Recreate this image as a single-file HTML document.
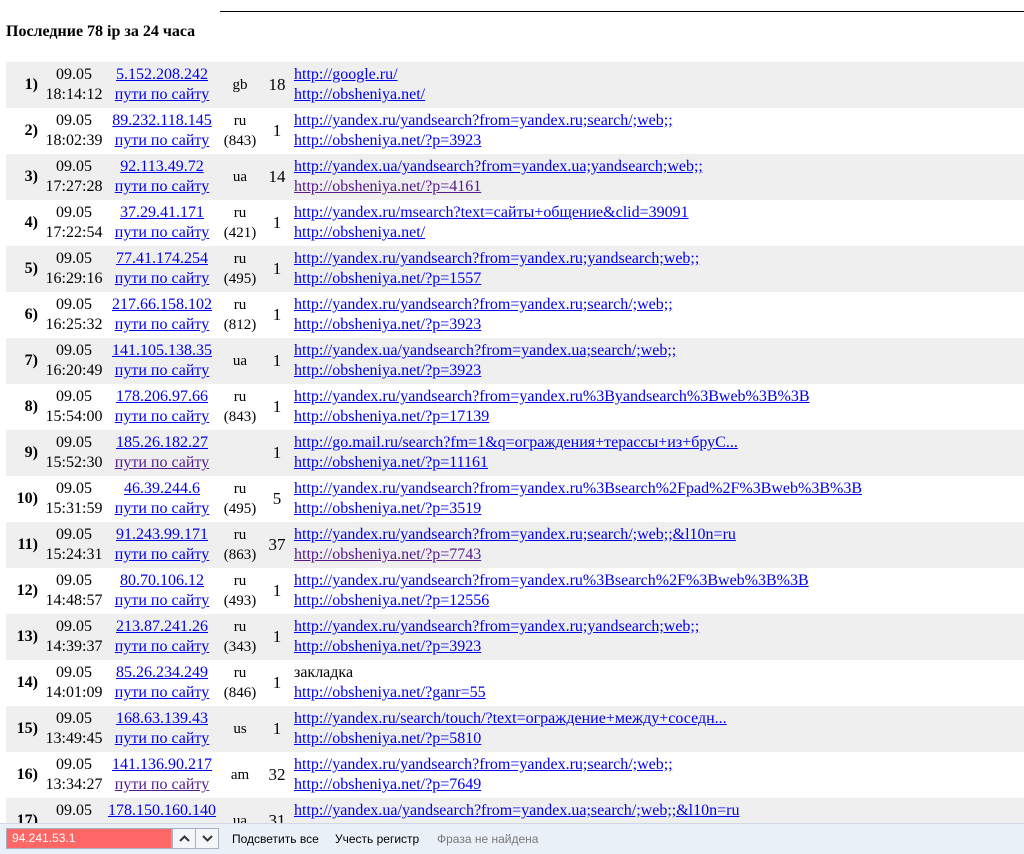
<!DOCTYPE html>
<html><head><meta charset="utf-8"><style>
body{margin:0;background:#fff;font-family:"Liberation Serif",serif;font-size:16px;color:#000;width:1024px;height:853px;overflow:hidden;position:relative}
.hr{position:absolute;left:220px;top:11px;width:804px;height:1px;background:#000}
h1{position:absolute;left:6px;top:23px;margin:0;font-size:16px;font-weight:bold}
table{position:absolute;left:6px;top:62px;width:1018px;border-collapse:collapse;table-layout:fixed}
td{height:46px;padding:0;line-height:20px;vertical-align:middle;white-space:nowrap;overflow:visible}
tr:nth-child(odd) td{background:#efefef}
.n{text-align:right;font-weight:bold;padding-right:2px}
.d{text-align:center}
.i{text-align:center}
.c{text-align:center;font-size:15px}
.k{text-align:center;font-size:17px}
.u{padding-left:4px}
a{color:#0000ee;text-decoration:underline}
a.v{color:#551a8b}
.bar{position:absolute;left:0;top:823px;width:1024px;height:30px;background:#eaf0f7;border-top:1px solid #cfd8e3;font-family:"Liberation Sans",sans-serif;font-size:12px}
.inp{position:absolute;left:6px;top:4px;width:166px;height:21px;background:#ff6666;border:1px solid #a6b2c2;box-sizing:border-box;color:#fff;line-height:19px;padding-left:5px}
.btn{position:absolute;top:4px;width:24px;height:21px;border:1px solid #a6b2c2;box-sizing:border-box;background:#f4f6f9}
.btn svg{position:absolute;left:6px;top:5px}
.t{position:absolute;top:8px;color:#000}
</style></head><body>
<div class="hr"></div>
<h1>Последние 78 ip за 24 часа</h1>
<table>
<colgroup><col style="width:34px"><col style="width:68px"><col style="width:108px"><col style="width:48px"><col style="width:26px"><col></colgroup>
<tr><td class="n">1)</td><td class="d">09.05<br>18:14:12</td><td class="i"><a>5.152.208.242</a><br><a>пути по сайту</a></td><td class="c">gb</td><td class="k">18</td><td class="u"><a>http://google.ru/</a><br><a>http://obsheniya.net/</a></td></tr>
<tr><td class="n">2)</td><td class="d">09.05<br>18:02:39</td><td class="i"><a>89.232.118.145</a><br><a>пути по сайту</a></td><td class="c">ru<br>(843)</td><td class="k">1</td><td class="u"><a>http://yandex.ru/yandsearch?from=yandex.ru;search/;web;;</a><br><a>http://obsheniya.net/?p=3923</a></td></tr>
<tr><td class="n">3)</td><td class="d">09.05<br>17:27:28</td><td class="i"><a>92.113.49.72</a><br><a>пути по сайту</a></td><td class="c">ua</td><td class="k">14</td><td class="u"><a>http://yandex.ua/yandsearch?from=yandex.ua;yandsearch;web;;</a><br><a class="v">http://obsheniya.net/?p=4161</a></td></tr>
<tr><td class="n">4)</td><td class="d">09.05<br>17:22:54</td><td class="i"><a>37.29.41.171</a><br><a>пути по сайту</a></td><td class="c">ru<br>(421)</td><td class="k">1</td><td class="u"><a>http://yandex.ru/msearch?text=сайты+общение&amp;clid=39091</a><br><a>http://obsheniya.net/</a></td></tr>
<tr><td class="n">5)</td><td class="d">09.05<br>16:29:16</td><td class="i"><a>77.41.174.254</a><br><a>пути по сайту</a></td><td class="c">ru<br>(495)</td><td class="k">1</td><td class="u"><a>http://yandex.ru/yandsearch?from=yandex.ru;yandsearch;web;;</a><br><a>http://obsheniya.net/?p=1557</a></td></tr>
<tr><td class="n">6)</td><td class="d">09.05<br>16:25:32</td><td class="i"><a>217.66.158.102</a><br><a>пути по сайту</a></td><td class="c">ru<br>(812)</td><td class="k">1</td><td class="u"><a>http://yandex.ru/yandsearch?from=yandex.ru;search/;web;;</a><br><a>http://obsheniya.net/?p=3923</a></td></tr>
<tr><td class="n">7)</td><td class="d">09.05<br>16:20:49</td><td class="i"><a>141.105.138.35</a><br><a>пути по сайту</a></td><td class="c">ua</td><td class="k">1</td><td class="u"><a>http://yandex.ua/yandsearch?from=yandex.ua;search/;web;;</a><br><a>http://obsheniya.net/?p=3923</a></td></tr>
<tr><td class="n">8)</td><td class="d">09.05<br>15:54:00</td><td class="i"><a>178.206.97.66</a><br><a>пути по сайту</a></td><td class="c">ru<br>(843)</td><td class="k">1</td><td class="u"><a>http://yandex.ru/yandsearch?from=yandex.ru%3Byandsearch%3Bweb%3B%3B</a><br><a>http://obsheniya.net/?p=17139</a></td></tr>
<tr><td class="n">9)</td><td class="d">09.05<br>15:52:30</td><td class="i"><a>185.26.182.27</a><br><a class="v">пути по сайту</a></td><td class="c"></td><td class="k">1</td><td class="u"><a>http://go.mail.ru/search?fm=1&amp;q=ограждения+терассы+из+бруС...</a><br><a>http://obsheniya.net/?p=11161</a></td></tr>
<tr><td class="n">10)</td><td class="d">09.05<br>15:31:59</td><td class="i"><a>46.39.244.6</a><br><a>пути по сайту</a></td><td class="c">ru<br>(495)</td><td class="k">5</td><td class="u"><a>http://yandex.ru/yandsearch?from=yandex.ru%3Bsearch%2Fpad%2F%3Bweb%3B%3B</a><br><a>http://obsheniya.net/?p=3519</a></td></tr>
<tr><td class="n">11)</td><td class="d">09.05<br>15:24:31</td><td class="i"><a>91.243.99.171</a><br><a>пути по сайту</a></td><td class="c">ru<br>(863)</td><td class="k">37</td><td class="u"><a>http://yandex.ru/yandsearch?from=yandex.ru;search/;web;;&amp;l10n=ru</a><br><a class="v">http://obsheniya.net/?p=7743</a></td></tr>
<tr><td class="n">12)</td><td class="d">09.05<br>14:48:57</td><td class="i"><a>80.70.106.12</a><br><a>пути по сайту</a></td><td class="c">ru<br>(493)</td><td class="k">1</td><td class="u"><a>http://yandex.ru/yandsearch?from=yandex.ru%3Bsearch%2F%3Bweb%3B%3B</a><br><a>http://obsheniya.net/?p=12556</a></td></tr>
<tr><td class="n">13)</td><td class="d">09.05<br>14:39:37</td><td class="i"><a>213.87.241.26</a><br><a>пути по сайту</a></td><td class="c">ru<br>(343)</td><td class="k">1</td><td class="u"><a>http://yandex.ru/yandsearch?from=yandex.ru;yandsearch;web;;</a><br><a>http://obsheniya.net/?p=3923</a></td></tr>
<tr><td class="n">14)</td><td class="d">09.05<br>14:01:09</td><td class="i"><a>85.26.234.249</a><br><a>пути по сайту</a></td><td class="c">ru<br>(846)</td><td class="k">1</td><td class="u">закладка<br><a>http://obsheniya.net/?ganr=55</a></td></tr>
<tr><td class="n">15)</td><td class="d">09.05<br>13:49:45</td><td class="i"><a>168.63.139.43</a><br><a>пути по сайту</a></td><td class="c">us</td><td class="k">1</td><td class="u"><a>http://yandex.ru/search/touch/?text=ограждение+между+соседн...</a><br><a>http://obsheniya.net/?p=5810</a></td></tr>
<tr><td class="n">16)</td><td class="d">09.05<br>13:34:27</td><td class="i"><a>141.136.90.217</a><br><a class="v">пути по сайту</a></td><td class="c">am</td><td class="k">32</td><td class="u"><a>http://yandex.ru/yandsearch?from=yandex.ru;search/;web;;</a><br><a>http://obsheniya.net/?p=7649</a></td></tr>
<tr><td class="n">17)</td><td class="d">09.05<br>13:20:11</td><td class="i"><a>178.150.160.140</a><br><a>пути по сайту</a></td><td class="c">ua</td><td class="k">31</td><td class="u"><a>http://yandex.ua/yandsearch?from=yandex.ua;search/;web;;&amp;l10n=ru</a><br><a>http://obsheniya.net/?p=3923</a></td></tr>
</table>
<div class="bar">
<div class="inp">94.241.53.1</div>
<div class="btn" style="left:172px"><svg width="11" height="9"><path d="M1 7L5.5 2.5L10 7" fill="none" stroke="#333" stroke-width="2"/></svg></div>
<div class="btn" style="left:195px"><svg width="11" height="9"><path d="M1 2L5.5 6.5L10 2" fill="none" stroke="#333" stroke-width="2"/></svg></div>
<div class="t" style="left:232px">Подсветить все</div>
<div class="t" style="left:335px">Учесть регистр</div>
<div class="t" style="left:437px;color:#777">Фраза не найдена</div>
</div>
</body></html>
